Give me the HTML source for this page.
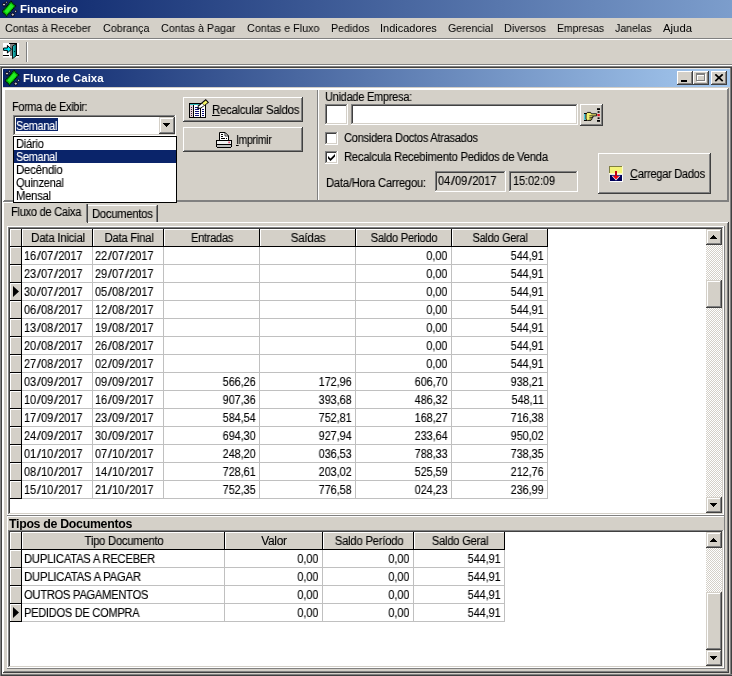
<!DOCTYPE html>
<html><head><meta charset="utf-8"><title>Financeiro</title>
<style>
html,body{margin:0;padding:0}
body{width:732px;height:676px;overflow:hidden;background:#d4d0c8;position:relative;font-family:"Liberation Sans",sans-serif;font-size:11px}
div,svg{position:absolute;box-sizing:border-box}
.t{white-space:nowrap;font-family:"Liberation Sans",sans-serif;will-change:transform;-webkit-font-smoothing:antialiased}
.sl{display:inline-block;transform:scaleX(1.45);margin:0 1.2px}
.tb{background:linear-gradient(to right,#0a246a 0%,#a6caf0 100%)}
.trk{background-color:#eae8e4;background-image:linear-gradient(45deg,#fff 25%,transparent 25%,transparent 75%,#fff 75%),linear-gradient(45deg,#fff 25%,transparent 25%,transparent 75%,#fff 75%);background-size:2px 2px;background-position:0 0,1px 1px;background-color:#d4d0c8}
u{text-decoration:underline}
</style></head><body>
<div style="left:0px;top:0px;width:732px;height:18px;background:linear-gradient(to right,#0a246a 0px,#a6caf0 1000px);"></div>
<svg style="left:0px;top:0px" width="18" height="18" viewBox="0 0 18 18">
<polygon points="11,1.3 15.7,6 6.6,16.2 2.2,11.6" fill="#08c808" stroke="#001000" stroke-width="1.2" stroke-dasharray="1.3 0.5"/>
<polygon points="10.8,3.8 13.4,6.4 7,13.6 4.6,11.2" fill="#24ee24"/>
<path d="M10.3,3.4 L4.2,10.4" stroke="#005800" stroke-width="0.9" stroke-dasharray="1 0.7" fill="none"/>
<circle cx="4" cy="4.6" r="1.5" fill="#c8c8c8" stroke="#000010" stroke-width="1"/>
<circle cx="6.6" cy="2.2" r="1" fill="#d8d8d8" stroke="#000010" stroke-width="0.9"/>
<circle cx="15.6" cy="11.3" r="1.1" fill="#d8d8d8" stroke="#000010" stroke-width="0.9"/>
<circle cx="12.8" cy="14.6" r="1.6" fill="#c8c8c8" stroke="#000010" stroke-width="1"/>
</svg>
<div class="t" style="top:3px;font-size:11px;line-height:13px;color:#fff;font-weight:bold;left:20.37px;transform-origin:0 0;transform:scaleX(1.043);">Financeiro</div>
<div class="t" style="top:22px;font-size:11px;line-height:13px;color:#000;left:5.42px;transform-origin:0 0;transform:scaleX(0.970);">Contas à Receber</div>
<div class="t" style="top:22px;font-size:11px;line-height:13px;color:#000;left:102.92px;transform-origin:0 0;transform:scaleX(0.975);">Cobrança</div>
<div class="t" style="top:22px;font-size:11px;line-height:13px;color:#000;left:160.92px;transform-origin:0 0;transform:scaleX(0.975);">Contas à Pagar</div>
<div class="t" style="top:22px;font-size:11px;line-height:13px;color:#000;left:246.91px;transform-origin:0 0;transform:scaleX(0.980);">Contas e Fluxo</div>
<div class="t" style="top:22px;font-size:11px;line-height:13px;color:#000;left:330.92px;transform-origin:0 0;transform:scaleX(0.969);">Pedidos</div>
<div class="t" style="top:22px;font-size:11px;line-height:13px;color:#000;left:379.9px;transform-origin:0 0;">Indicadores</div>
<div class="t" style="top:22px;font-size:11px;line-height:13px;color:#000;left:447.93px;transform-origin:0 0;transform:scaleX(0.956);">Gerencial</div>
<div class="t" style="top:22px;font-size:11px;line-height:13px;color:#000;left:503.91px;transform-origin:0 0;transform:scaleX(0.982);">Diversos</div>
<div class="t" style="top:22px;font-size:11px;line-height:13px;color:#000;left:556.93px;transform-origin:0 0;transform:scaleX(0.949);">Empresas</div>
<div class="t" style="top:22px;font-size:11px;line-height:13px;color:#000;left:615.42px;transform-origin:0 0;transform:scaleX(0.963);">Janelas</div>
<div class="t" style="top:22px;font-size:11px;line-height:13px;color:#000;left:662.88px;transform-origin:0 0;transform:scaleX(1.031);">Ajuda</div>
<div style="left:0px;top:38px;width:732px;height:1px;background:#808080;"></div>
<div style="left:0px;top:39px;width:732px;height:1px;background:#ffffff;"></div>
<svg style="left:3px;top:43px" width="17" height="17" viewBox="0 0 17 17" shape-rendering="crispEdges">
<rect x="0" y="0" width="16" height="14" fill="#fff"/>
<rect x="0" y="14" width="16" height="1" fill="#ebe9e5"/>
<rect x="6.5" y="1" width="6" height="11.5" fill="#808080"/>
<rect x="6" y="0" width="8" height="1" fill="#000"/>
<rect x="13" y="0" width="1" height="13" fill="#000"/>
<rect x="0" y="12" width="6" height="1" fill="#000"/>
<rect x="13" y="12" width="3" height="1" fill="#000"/>
<polygon points="9.5,3.2 13,1 13,13 9.5,15.6" fill="#20b4b4" stroke="#000" stroke-width="0.9" shape-rendering="auto"/>
<polygon points="11.4,2.6 12.6,1.8 12.6,12.6 11.4,13.6" fill="#008888" shape-rendering="auto"/>
<rect x="10.5" y="8" width="1" height="1" fill="#003030"/>
<polygon points="0.6,5 4.4,5 4.4,2.4 8.4,6.2 4.4,10 4.4,7.4 0.6,7.4" fill="#00e8f8" stroke="#000" stroke-width="1" shape-rendering="auto"/>
</svg>
<div style="left:26px;top:42px;width:1px;height:20px;background:#808080;"></div>
<div style="left:27px;top:42px;width:1px;height:20px;background:#ffffff;"></div>
<div style="left:0px;top:64px;width:732px;height:1px;background:#808080;"></div>
<div style="left:0px;top:65px;width:732px;height:1px;background:#ffffff;"></div>
<div style="left:0px;top:66px;width:732px;height:1px;background:#808080;"></div>
<div style="left:1px;top:67px;width:731px;height:1px;background:#404040;"></div>
<div style="left:0px;top:66px;width:1px;height:610px;background:#808080;"></div>
<div style="left:1px;top:67px;width:1px;height:609px;background:#404040;"></div>
<div style="left:2px;top:68px;width:1px;height:608px;background:#ffffff;"></div>
<div style="left:2px;top:68px;width:728px;height:1px;background:#e8e6e2;"></div>
<div style="left:730px;top:68px;width:1px;height:608px;background:#808080;"></div>
<div style="left:731px;top:68px;width:1px;height:608px;background:#404040;"></div>
<div style="left:2px;top:674px;width:730px;height:1px;background:#808080;"></div>
<div style="left:2px;top:675px;width:730px;height:1px;background:#404040;"></div>
<div class="tb" style="left:3px;top:69px;width:727px;height:18px;"></div>
<svg style="left:3px;top:69px" width="18" height="18" viewBox="0 0 18 18">
<polygon points="11,1.3 15.7,6 6.6,16.2 2.2,11.6" fill="#08c808" stroke="#001000" stroke-width="1.2" stroke-dasharray="1.3 0.5"/>
<polygon points="10.8,3.8 13.4,6.4 7,13.6 4.6,11.2" fill="#24ee24"/>
<path d="M10.3,3.4 L4.2,10.4" stroke="#005800" stroke-width="0.9" stroke-dasharray="1 0.7" fill="none"/>
<circle cx="4" cy="4.6" r="1.5" fill="#c8c8c8" stroke="#000010" stroke-width="1"/>
<circle cx="6.6" cy="2.2" r="1" fill="#d8d8d8" stroke="#000010" stroke-width="0.9"/>
<circle cx="15.6" cy="11.3" r="1.1" fill="#d8d8d8" stroke="#000010" stroke-width="0.9"/>
<circle cx="12.8" cy="14.6" r="1.6" fill="#c8c8c8" stroke="#000010" stroke-width="1"/>
</svg>
<div class="t" style="top:72px;font-size:11px;line-height:13px;color:#fff;font-weight:bold;left:23.38px;transform-origin:0 0;transform:scaleX(1.037);">Fluxo de Caixa</div>
<div style="left:677px;top:71px;width:16px;height:14px;background:#d4d0c8;"></div>
<div style="left:677px;top:71px;width:15px;height:1px;background:#ffffff;"></div>
<div style="left:677px;top:71px;width:1px;height:13px;background:#ffffff;"></div>
<div style="left:677px;top:84px;width:16px;height:1px;background:#404040;"></div>
<div style="left:692px;top:71px;width:1px;height:14px;background:#404040;"></div>
<div style="left:678px;top:83px;width:14px;height:1px;background:#808080;"></div>
<div style="left:691px;top:72px;width:1px;height:12px;background:#808080;"></div>
<div style="left:693px;top:71px;width:16px;height:14px;background:#d4d0c8;"></div>
<div style="left:693px;top:71px;width:15px;height:1px;background:#ffffff;"></div>
<div style="left:693px;top:71px;width:1px;height:13px;background:#ffffff;"></div>
<div style="left:693px;top:84px;width:16px;height:1px;background:#404040;"></div>
<div style="left:708px;top:71px;width:1px;height:14px;background:#404040;"></div>
<div style="left:694px;top:83px;width:14px;height:1px;background:#808080;"></div>
<div style="left:707px;top:72px;width:1px;height:12px;background:#808080;"></div>
<div style="left:711px;top:71px;width:16px;height:14px;background:#d4d0c8;"></div>
<div style="left:711px;top:71px;width:15px;height:1px;background:#ffffff;"></div>
<div style="left:711px;top:71px;width:1px;height:13px;background:#ffffff;"></div>
<div style="left:711px;top:84px;width:16px;height:1px;background:#404040;"></div>
<div style="left:726px;top:71px;width:1px;height:14px;background:#404040;"></div>
<div style="left:712px;top:83px;width:14px;height:1px;background:#808080;"></div>
<div style="left:725px;top:72px;width:1px;height:12px;background:#808080;"></div>
<div style="left:681px;top:80px;width:6px;height:2px;background:#000;"></div>
<div style="left:697px;top:74px;width:9px;height:8px;border:1px solid #fff;border-top-width:2px;"></div>
<div style="left:696px;top:73px;width:9px;height:8px;border:1px solid #808080;border-top-width:2px;"></div>
<svg style="left:714px;top:74px" width="10" height="8" viewBox="0 0 10 8"><path d="M1.3,0.3 L8.7,7.2 M8.7,0.3 L1.3,7.2" stroke="#000" stroke-width="1.7" fill="none"/></svg>
<div style="left:3px;top:88px;width:726px;height:1px;background:#ffffff;"></div>
<div style="left:3px;top:89px;width:725px;height:1px;background:#ffffff;"></div>
<div style="left:3px;top:88px;width:1px;height:114px;background:#ffffff;"></div>
<div style="left:4px;top:88px;width:1px;height:113px;background:#ffffff;"></div>
<div style="left:727px;top:89px;width:1px;height:113px;background:#808080;"></div>
<div style="left:728px;top:88px;width:1px;height:114px;background:#808080;"></div>
<div style="left:3px;top:201px;width:726px;height:1px;background:#808080;"></div>
<div style="left:3px;top:202px;width:1px;height:470px;background:#ffffff;"></div>
<div style="left:727px;top:223px;width:1px;height:449px;background:#808080;"></div>
<div style="left:728px;top:222px;width:1px;height:451px;background:#404040;"></div>
<div style="left:4px;top:671px;width:724px;height:1px;background:#808080;"></div>
<div style="left:3px;top:672px;width:726px;height:1px;background:#404040;"></div>
<div style="left:317px;top:90px;width:1px;height:110px;background:#808080;"></div>
<div style="left:318px;top:90px;width:1px;height:110px;background:#ffffff;"></div>
<div style="left:4px;top:200px;width:724px;height:1px;background:#808080;"></div>
<div style="left:87px;top:222px;width:641px;height:1px;background:#ffffff;"></div>
<div style="left:4px;top:202px;width:82px;height:1px;background:#ffffff;"></div>
<div style="left:3px;top:203px;width:1px;height:20px;background:#ffffff;"></div>
<div style="left:86px;top:204px;width:1px;height:18px;background:#808080;"></div>
<div style="left:87px;top:204px;width:1px;height:19px;background:#404040;"></div>
<div class="t" style="top:206px;font-size:12px;line-height:13px;color:#000;-webkit-text-stroke:0.12px;letter-spacing:-0.3px;left:10.75px;transform-origin:0 0;transform:scaleX(0.924);">Fluxo de Caixa</div>
<div style="left:88px;top:205px;width:68px;height:1px;background:#ffffff;"></div>
<div style="left:156px;top:206px;width:1px;height:16px;background:#808080;"></div>
<div style="left:157px;top:205px;width:1px;height:17px;background:#404040;"></div>
<div class="t" style="top:208px;font-size:12px;line-height:13px;color:#000;-webkit-text-stroke:0.12px;letter-spacing:-0.3px;left:91.94px;transform-origin:0 0;transform:scaleX(0.940);">Documentos</div>
<div class="t" style="top:101px;font-size:12px;line-height:13px;color:#000;-webkit-text-stroke:0.12px;letter-spacing:-0.3px;left:11.86px;transform-origin:0 0;transform:scaleX(0.904);">Forma de Exibir:</div>
<div style="left:13px;top:115px;width:163px;height:21px;background:#fff;"></div>
<div style="left:13px;top:115px;width:162px;height:1px;background:#808080;"></div>
<div style="left:13px;top:115px;width:1px;height:20px;background:#808080;"></div>
<div style="left:14px;top:116px;width:160px;height:1px;background:#404040;"></div>
<div style="left:14px;top:116px;width:1px;height:18px;background:#404040;"></div>
<div style="left:13px;top:135px;width:163px;height:1px;background:#ffffff;"></div>
<div style="left:175px;top:115px;width:1px;height:21px;background:#ffffff;"></div>
<div style="left:14px;top:134px;width:161px;height:1px;background:#d4d0c8;"></div>
<div style="left:174px;top:116px;width:1px;height:19px;background:#d4d0c8;"></div>
<div style="left:16px;top:118px;width:42px;height:13px;background:#0a246a;"></div>
<div class="t" style="top:120px;font-size:12px;line-height:13px;color:#fff;-webkit-text-stroke:0.12px;letter-spacing:-0.3px;left:16.06px;transform-origin:0 0;transform:scaleX(0.906);">Semanal</div>
<div style="left:159px;top:117px;width:16px;height:17px;background:#d4d0c8;"></div>
<div style="left:160px;top:118px;width:13px;height:1px;background:#ffffff;"></div>
<div style="left:160px;top:118px;width:1px;height:14px;background:#ffffff;"></div>
<div style="left:159px;top:133px;width:16px;height:1px;background:#404040;"></div>
<div style="left:174px;top:117px;width:1px;height:17px;background:#404040;"></div>
<div style="left:160px;top:132px;width:14px;height:1px;background:#808080;"></div>
<div style="left:173px;top:118px;width:1px;height:15px;background:#808080;"></div>
<div style="left:163px;top:123px;width:7px;height:1px;background:#000;"></div>
<div style="left:164px;top:124px;width:5px;height:1px;background:#000;"></div>
<div style="left:165px;top:125px;width:3px;height:1px;background:#000;"></div>
<div style="left:166px;top:126px;width:1px;height:1px;background:#000;"></div>
<div style="left:13px;top:136px;width:164px;height:67px;background:#fff;border:1px solid #000;"></div>
<div class="t" style="top:138px;font-size:12px;line-height:13px;color:#000;-webkit-text-stroke:0.12px;letter-spacing:-0.3px;left:16.04px;transform-origin:0 0;transform:scaleX(0.934);">Diário</div>
<div style="left:14px;top:150px;width:162px;height:13px;background:#0a246a;"></div>
<div class="t" style="top:151px;font-size:12px;line-height:13px;color:#fff;-webkit-text-stroke:0.12px;letter-spacing:-0.3px;left:16.06px;transform-origin:0 0;transform:scaleX(0.906);">Semanal</div>
<div class="t" style="top:164px;font-size:12px;line-height:13px;color:#000;-webkit-text-stroke:0.12px;letter-spacing:-0.3px;left:16.02px;transform-origin:0 0;transform:scaleX(0.961);">Decêndio</div>
<div class="t" style="top:177px;font-size:12px;line-height:13px;color:#000;-webkit-text-stroke:0.12px;letter-spacing:-0.3px;left:16.04px;transform-origin:0 0;transform:scaleX(0.929);">Quinzenal</div>
<div class="t" style="top:190px;font-size:12px;line-height:13px;color:#000;-webkit-text-stroke:0.12px;letter-spacing:-0.3px;left:16.04px;transform-origin:0 0;transform:scaleX(0.941);">Mensal</div>
<div style="left:183px;top:97px;width:120px;height:25px;background:#d4d0c8;"></div>
<div style="left:183px;top:97px;width:119px;height:1px;background:#ffffff;"></div>
<div style="left:183px;top:97px;width:1px;height:24px;background:#ffffff;"></div>
<div style="left:183px;top:121px;width:120px;height:1px;background:#404040;"></div>
<div style="left:302px;top:97px;width:1px;height:25px;background:#404040;"></div>
<div style="left:184px;top:120px;width:118px;height:1px;background:#808080;"></div>
<div style="left:301px;top:98px;width:1px;height:23px;background:#808080;"></div>
<svg style="left:188px;top:98px" width="22" height="22" viewBox="0 0 22 22" shape-rendering="crispEdges"><rect x="1" y="5" width="17" height="15" fill="#000"/><rect x="2" y="6" width="15" height="13" fill="#fff"/><rect x="2" y="6" width="9" height="1" fill="#30b8b8"/><rect x="2" y="7" width="3" height="12" fill="#e4d0d8"/><rect x="5" y="7" width="1" height="12" fill="#000"/><rect x="12" y="9" width="1" height="10" fill="#000"/><rect x="3" y="9" width="1" height="1" fill="#302030"/><rect x="7" y="9" width="4" height="1" fill="#101078"/><rect x="3" y="11" width="1" height="1" fill="#302030"/><rect x="7" y="11" width="4" height="1" fill="#101078"/><rect x="14" y="11" width="2" height="1" fill="#101078"/><rect x="3" y="13" width="1" height="1" fill="#302030"/><rect x="7" y="13" width="4" height="1" fill="#101078"/><rect x="14" y="13" width="2" height="1" fill="#101078"/><rect x="3" y="15" width="1" height="1" fill="#302030"/><rect x="7" y="15" width="4" height="1" fill="#101078"/><rect x="14" y="15" width="2" height="1" fill="#101078"/><rect x="3" y="17" width="1" height="1" fill="#302030"/><rect x="7" y="17" width="4" height="1" fill="#101078"/><rect x="14" y="17" width="2" height="1" fill="#101078"/><g shape-rendering="auto"><polygon points="9.2,11.2 10,7.6 17.8,1 21,4.6 12.8,10.6" fill="#000"/><polygon points="10.6,9.8 11,8.2 14.2,5.6 16,7.6 12.4,9.8" fill="#fff"/><polygon points="14.4,5.2 17.8,2.4 19.6,4.6 16.2,7.2" fill="#f4f468"/></g></svg>
<div class="t" style="top:104px;font-size:12px;line-height:13px;color:#000;-webkit-text-stroke:0.12px;letter-spacing:-0.3px;left:211.83px;transform-origin:0 0;transform:scaleX(0.950);"><u>R</u>ecalcular Saldos</div>
<div style="left:183px;top:127px;width:120px;height:25px;background:#d4d0c8;"></div>
<div style="left:183px;top:127px;width:119px;height:1px;background:#ffffff;"></div>
<div style="left:183px;top:127px;width:1px;height:24px;background:#ffffff;"></div>
<div style="left:183px;top:151px;width:120px;height:1px;background:#404040;"></div>
<div style="left:302px;top:127px;width:1px;height:25px;background:#404040;"></div>
<div style="left:184px;top:150px;width:118px;height:1px;background:#808080;"></div>
<div style="left:301px;top:128px;width:1px;height:23px;background:#808080;"></div>
<svg style="left:215px;top:131px" width="18" height="18" viewBox="0 0 18 18">
<polygon points="4.5,1.5 10,1.5 13.5,5 13.5,9.5 4.5,9.5" fill="#fff" stroke="#000" stroke-width="1"/>
<polygon points="10,1.5 10,5 13.5,5" fill="#fff" stroke="#000" stroke-width="0.8"/>
<g fill="#000"><rect x="6" y="3" width="2" height="1"/><rect x="6" y="5" width="2" height="1"/><rect x="6" y="7" width="4" height="1"/><rect x="11" y="7" width="1" height="1"/></g>
<rect x="1.5" y="9.5" width="15" height="4" fill="#f0f0f0" stroke="#000" stroke-width="1"/>
<rect x="13.4" y="10.6" width="1.4" height="1.6" fill="#e02050"/>
<rect x="2" y="14" width="14" height="2" fill="#c0c0c0"/>
<rect x="1" y="13" width="1" height="3" fill="#000"/><rect x="16" y="13" width="1" height="3" fill="#000"/>
<rect x="2" y="16" width="14" height="1" fill="#000"/>
</svg>
<div class="t" style="top:134px;font-size:12px;line-height:13px;color:#000;-webkit-text-stroke:0.12px;letter-spacing:-0.3px;left:236.08px;transform-origin:0 0;transform:scaleX(0.865);"><u>I</u>mprimir</div>
<div class="t" style="top:91px;font-size:12px;line-height:13px;color:#000;-webkit-text-stroke:0.12px;letter-spacing:-0.3px;left:325.15px;transform-origin:0 0;transform:scaleX(0.919);">Unidade Empresa:</div>
<div style="left:325px;top:104px;width:23px;height:21px;background:#fff;"></div>
<div style="left:325px;top:104px;width:22px;height:1px;background:#808080;"></div>
<div style="left:325px;top:104px;width:1px;height:20px;background:#808080;"></div>
<div style="left:326px;top:105px;width:20px;height:1px;background:#404040;"></div>
<div style="left:326px;top:105px;width:1px;height:18px;background:#404040;"></div>
<div style="left:325px;top:124px;width:23px;height:1px;background:#ffffff;"></div>
<div style="left:347px;top:104px;width:1px;height:21px;background:#ffffff;"></div>
<div style="left:326px;top:123px;width:21px;height:1px;background:#d4d0c8;"></div>
<div style="left:346px;top:105px;width:1px;height:19px;background:#d4d0c8;"></div>
<div style="left:351px;top:104px;width:227px;height:21px;background:#fff;"></div>
<div style="left:351px;top:104px;width:226px;height:1px;background:#808080;"></div>
<div style="left:351px;top:104px;width:1px;height:20px;background:#808080;"></div>
<div style="left:352px;top:105px;width:224px;height:1px;background:#404040;"></div>
<div style="left:352px;top:105px;width:1px;height:18px;background:#404040;"></div>
<div style="left:351px;top:124px;width:227px;height:1px;background:#ffffff;"></div>
<div style="left:577px;top:104px;width:1px;height:21px;background:#ffffff;"></div>
<div style="left:352px;top:123px;width:225px;height:1px;background:#d4d0c8;"></div>
<div style="left:576px;top:105px;width:1px;height:19px;background:#d4d0c8;"></div>
<div style="left:580px;top:104px;width:23px;height:22px;background:#d4d0c8;"></div>
<div style="left:580px;top:104px;width:22px;height:1px;background:#ffffff;"></div>
<div style="left:580px;top:104px;width:1px;height:21px;background:#ffffff;"></div>
<div style="left:580px;top:125px;width:23px;height:1px;background:#404040;"></div>
<div style="left:602px;top:104px;width:1px;height:22px;background:#404040;"></div>
<div style="left:581px;top:124px;width:21px;height:1px;background:#808080;"></div>
<div style="left:601px;top:105px;width:1px;height:20px;background:#808080;"></div>
<svg style="left:583px;top:107px" width="19" height="17" viewBox="0 0 19 17">
<rect x="1" y="6.6" width="1.6" height="6.4" fill="#48d0e0"/>
<rect x="1" y="6" width="3" height="1" fill="#000"/><rect x="1" y="13" width="3" height="1" fill="#000"/>
<path d="M3,7 L4.4,5.4 L7.6,5.4 L8.4,6.8 L13.6,6.8 L13.6,8.8 L10,9 L10,10.4 L9,10.4 L9,12 L8,13.4 L4.4,13.4 L3,12.4 Z" fill="#f4f070" stroke="#000" stroke-width="0.9"/>
<path d="M6.4,8.8 L10,8.8 M6.4,10.6 L9,10.6 M6.4,12 L8.4,12" stroke="#000" stroke-width="0.7" fill="none"/>
<g fill="#000"><rect x="14" y="1.2" width="3" height="1.8"/><rect x="14.6" y="4.2" width="2" height="1.6"/><rect x="14.6" y="10.4" width="2" height="1.6"/><rect x="14" y="13" width="3" height="1.8"/></g>
<rect x="14.4" y="7" width="2.4" height="2.2" fill="#e01020"/>
</svg>
<div style="left:325px;top:132px;width:13px;height:13px;background:#fff;"></div>
<div style="left:325px;top:132px;width:12px;height:1px;background:#808080;"></div>
<div style="left:325px;top:132px;width:1px;height:12px;background:#808080;"></div>
<div style="left:326px;top:133px;width:10px;height:1px;background:#404040;"></div>
<div style="left:326px;top:133px;width:1px;height:10px;background:#404040;"></div>
<div style="left:325px;top:144px;width:13px;height:1px;background:#ffffff;"></div>
<div style="left:337px;top:132px;width:1px;height:13px;background:#ffffff;"></div>
<div style="left:326px;top:143px;width:11px;height:1px;background:#d4d0c8;"></div>
<div style="left:336px;top:133px;width:1px;height:11px;background:#d4d0c8;"></div>
<div style="left:325px;top:151px;width:13px;height:13px;background:#fff;"></div>
<div style="left:325px;top:151px;width:12px;height:1px;background:#808080;"></div>
<div style="left:325px;top:151px;width:1px;height:12px;background:#808080;"></div>
<div style="left:326px;top:152px;width:10px;height:1px;background:#404040;"></div>
<div style="left:326px;top:152px;width:1px;height:10px;background:#404040;"></div>
<div style="left:325px;top:163px;width:13px;height:1px;background:#ffffff;"></div>
<div style="left:337px;top:151px;width:1px;height:13px;background:#ffffff;"></div>
<div style="left:326px;top:162px;width:11px;height:1px;background:#d4d0c8;"></div>
<div style="left:336px;top:152px;width:1px;height:11px;background:#d4d0c8;"></div>
<svg style="left:328px;top:154px" width="7" height="7" viewBox="0 0 7 7"><path d="M0,2 L2.5,4.5 L7,0 L7,2.6 L2.5,7 L0,4.6 Z" fill="#000"/></svg>
<div class="t" style="top:132px;font-size:12px;line-height:13px;color:#000;-webkit-text-stroke:0.12px;letter-spacing:-0.3px;left:343.74px;transform-origin:0 0;transform:scaleX(0.927);">Considera Doctos Atrasados</div>
<div class="t" style="top:151px;font-size:12px;line-height:13px;color:#000;-webkit-text-stroke:0.12px;letter-spacing:-0.3px;left:343.73px;transform-origin:0 0;transform:scaleX(0.943);">Recalcula Recebimento Pedidos de Venda</div>
<div class="t" style="top:177px;font-size:12px;line-height:13px;color:#000;-webkit-text-stroke:0.12px;letter-spacing:-0.3px;left:326.13px;transform-origin:0 0;transform:scaleX(0.944);">Data/Hora Carregou:</div>
<div style="left:435px;top:171px;width:71px;height:21px;background:#d4d0c8;"></div>
<div style="left:435px;top:171px;width:70px;height:1px;background:#808080;"></div>
<div style="left:435px;top:171px;width:1px;height:20px;background:#808080;"></div>
<div style="left:436px;top:172px;width:68px;height:1px;background:#404040;"></div>
<div style="left:436px;top:172px;width:1px;height:18px;background:#404040;"></div>
<div style="left:435px;top:191px;width:71px;height:1px;background:#ffffff;"></div>
<div style="left:505px;top:171px;width:1px;height:21px;background:#ffffff;"></div>
<div style="left:436px;top:190px;width:69px;height:1px;background:#d4d0c8;"></div>
<div style="left:504px;top:172px;width:1px;height:19px;background:#d4d0c8;"></div>
<div class="t" style="top:175px;font-size:12px;line-height:13px;color:#000;-webkit-text-stroke:0.12px;left:438.26px;transform-origin:0 0;transform:scaleX(0.900);">04<span class="sl">/</span>09<span class="sl">/</span>2017</div>
<div style="left:509px;top:171px;width:69px;height:21px;background:#d4d0c8;"></div>
<div style="left:509px;top:171px;width:68px;height:1px;background:#808080;"></div>
<div style="left:509px;top:171px;width:1px;height:20px;background:#808080;"></div>
<div style="left:510px;top:172px;width:66px;height:1px;background:#404040;"></div>
<div style="left:510px;top:172px;width:1px;height:18px;background:#404040;"></div>
<div style="left:509px;top:191px;width:69px;height:1px;background:#ffffff;"></div>
<div style="left:577px;top:171px;width:1px;height:21px;background:#ffffff;"></div>
<div style="left:510px;top:190px;width:67px;height:1px;background:#d4d0c8;"></div>
<div style="left:576px;top:172px;width:1px;height:19px;background:#d4d0c8;"></div>
<div class="t" style="top:175px;font-size:12px;line-height:13px;color:#000;-webkit-text-stroke:0.12px;left:512.76px;transform-origin:0 0;transform:scaleX(0.900);">15:02:09</div>
<div style="left:598px;top:153px;width:113px;height:41px;background:#d4d0c8;"></div>
<div style="left:598px;top:153px;width:112px;height:1px;background:#ffffff;"></div>
<div style="left:598px;top:153px;width:1px;height:40px;background:#ffffff;"></div>
<div style="left:598px;top:193px;width:113px;height:1px;background:#404040;"></div>
<div style="left:710px;top:153px;width:1px;height:41px;background:#404040;"></div>
<div style="left:599px;top:192px;width:111px;height:1px;background:#808080;"></div>
<div style="left:709px;top:154px;width:1px;height:39px;background:#808080;"></div>
<svg style="left:609px;top:166px" width="15" height="17" viewBox="0 0 15 17">
<rect x="0" y="0" width="14" height="8" fill="#fbfbc8"/>
<rect x="1" y="1" width="12" height="6" fill="#f4f478"/>
<rect x="0" y="0" width="13" height="1" fill="#808040"/><rect x="0" y="0" width="1" height="7" fill="#808040"/>
<rect x="0" y="8" width="14" height="1" fill="#ecebe6"/>
<rect x="0.6" y="9" width="13.4" height="7" fill="#fff"/>
<rect x="1" y="9" width="12" height="6" fill="#000058"/>
<polygon points="2.6,9.8 11.4,9.8 7,14.6" fill="#fff"/>
<rect x="6" y="5" width="2" height="5.4" fill="#c00010"/>
<polygon points="3.8,10 10.2,10 7,13.4" fill="#f00010"/>
</svg>
<div class="t" style="top:168px;font-size:12px;line-height:13px;color:#000;-webkit-text-stroke:0.12px;letter-spacing:-0.3px;left:630.45px;transform-origin:0 0;transform:scaleX(0.922);"><u>C</u>arregar Dados</div>
<div style="left:7px;top:226px;width:718px;height:1px;background:#ffffff;"></div>
<div style="left:7px;top:226px;width:1px;height:443px;background:#ffffff;"></div>
<div style="left:724px;top:226px;width:1px;height:443px;background:#808080;"></div>
<div style="left:7px;top:668px;width:718px;height:1px;background:#808080;"></div>
<div style="left:8px;top:227px;width:716px;height:288px;background:#fff;"></div>
<div style="left:8px;top:227px;width:715px;height:1px;background:#808080;"></div>
<div style="left:8px;top:227px;width:1px;height:287px;background:#808080;"></div>
<div style="left:9px;top:228px;width:713px;height:1px;background:#404040;"></div>
<div style="left:9px;top:228px;width:1px;height:285px;background:#404040;"></div>
<div style="left:8px;top:514px;width:716px;height:1px;background:#ffffff;"></div>
<div style="left:723px;top:227px;width:1px;height:288px;background:#ffffff;"></div>
<div style="left:9px;top:513px;width:714px;height:1px;background:#d4d0c8;"></div>
<div style="left:722px;top:228px;width:1px;height:286px;background:#d4d0c8;"></div>
<div style="left:10px;top:229px;width:11px;height:17px;background:#d4d0c8;"></div>
<div style="left:10px;top:229px;width:11px;height:1px;background:#ffffff;"></div>
<div style="left:10px;top:229px;width:1px;height:17px;background:#ffffff;"></div>
<div style="left:21px;top:229px;width:1px;height:18px;background:#000;"></div>
<div style="left:22px;top:229px;width:70px;height:17px;background:#d4d0c8;"></div>
<div style="left:22px;top:229px;width:70px;height:1px;background:#ffffff;"></div>
<div style="left:22px;top:229px;width:1px;height:17px;background:#ffffff;"></div>
<div style="left:92px;top:229px;width:1px;height:18px;background:#000;"></div>
<div class="t" style="top:232px;font-size:12px;line-height:13px;color:#000;-webkit-text-stroke:0.12px;letter-spacing:-0.3px;left:-92.3px;width:300px;text-align:center;transform-origin:50% 0;transform:scaleX(0.961);">Data Inicial</div>
<div style="left:93px;top:229px;width:70px;height:17px;background:#d4d0c8;"></div>
<div style="left:93px;top:229px;width:70px;height:1px;background:#ffffff;"></div>
<div style="left:93px;top:229px;width:1px;height:17px;background:#ffffff;"></div>
<div style="left:163px;top:229px;width:1px;height:18px;background:#000;"></div>
<div class="t" style="top:232px;font-size:12px;line-height:13px;color:#000;-webkit-text-stroke:0.12px;letter-spacing:-0.3px;left:-21.3px;width:300px;text-align:center;transform-origin:50% 0;transform:scaleX(0.950);">Data Final</div>
<div style="left:164px;top:229px;width:95px;height:17px;background:#d4d0c8;"></div>
<div style="left:164px;top:229px;width:95px;height:1px;background:#ffffff;"></div>
<div style="left:164px;top:229px;width:1px;height:17px;background:#ffffff;"></div>
<div style="left:259px;top:229px;width:1px;height:18px;background:#000;"></div>
<div class="t" style="top:232px;font-size:12px;line-height:13px;color:#000;-webkit-text-stroke:0.12px;letter-spacing:-0.3px;left:62.2px;width:300px;text-align:center;transform-origin:50% 0;transform:scaleX(0.925);">Entradas</div>
<div style="left:260px;top:229px;width:95px;height:17px;background:#d4d0c8;"></div>
<div style="left:260px;top:229px;width:95px;height:1px;background:#ffffff;"></div>
<div style="left:260px;top:229px;width:1px;height:17px;background:#ffffff;"></div>
<div style="left:355px;top:229px;width:1px;height:18px;background:#000;"></div>
<div class="t" style="top:232px;font-size:12px;line-height:13px;color:#000;-webkit-text-stroke:0.12px;letter-spacing:-0.3px;left:158.2px;width:300px;text-align:center;transform-origin:50% 0;transform:scaleX(0.973);">Saídas</div>
<div style="left:356px;top:229px;width:95px;height:17px;background:#d4d0c8;"></div>
<div style="left:356px;top:229px;width:95px;height:1px;background:#ffffff;"></div>
<div style="left:356px;top:229px;width:1px;height:17px;background:#ffffff;"></div>
<div style="left:451px;top:229px;width:1px;height:18px;background:#000;"></div>
<div class="t" style="top:232px;font-size:12px;line-height:13px;color:#000;-webkit-text-stroke:0.12px;letter-spacing:-0.3px;left:254.2px;width:300px;text-align:center;transform-origin:50% 0;transform:scaleX(0.932);">Saldo Periodo</div>
<div style="left:452px;top:229px;width:95px;height:17px;background:#d4d0c8;"></div>
<div style="left:452px;top:229px;width:95px;height:1px;background:#ffffff;"></div>
<div style="left:452px;top:229px;width:1px;height:17px;background:#ffffff;"></div>
<div style="left:547px;top:229px;width:1px;height:18px;background:#000;"></div>
<div class="t" style="top:232px;font-size:12px;line-height:13px;color:#000;-webkit-text-stroke:0.12px;letter-spacing:-0.3px;left:350.2px;width:300px;text-align:center;transform-origin:50% 0;transform:scaleX(0.916);">Saldo Geral</div>
<div style="left:10px;top:246px;width:538px;height:1px;background:#000;"></div>
<div style="left:10px;top:247px;width:11px;height:17px;background:#d4d0c8;"></div>
<div style="left:10px;top:247px;width:11px;height:1px;background:#ffffff;"></div>
<div style="left:10px;top:247px;width:1px;height:17px;background:#ffffff;"></div>
<div style="left:21px;top:247px;width:1px;height:18px;background:#000;"></div>
<div style="left:10px;top:264px;width:12px;height:1px;background:#000;"></div>
<div style="left:22px;top:264px;width:526px;height:1px;background:#c0c0c0;"></div>
<div style="left:92px;top:247px;width:1px;height:18px;background:#c0c0c0;"></div>
<div class="t" style="top:250px;font-size:12px;line-height:13px;color:#000;-webkit-text-stroke:0.12px;left:23.96px;transform-origin:0 0;transform:scaleX(0.900);">16<span class="sl">/</span>07<span class="sl">/</span>2017</div>
<div style="left:163px;top:247px;width:1px;height:18px;background:#c0c0c0;"></div>
<div class="t" style="top:250px;font-size:12px;line-height:13px;color:#000;-webkit-text-stroke:0.12px;left:94.96px;transform-origin:0 0;transform:scaleX(0.900);">22<span class="sl">/</span>07<span class="sl">/</span>2017</div>
<div style="left:259px;top:247px;width:1px;height:18px;background:#c0c0c0;"></div>
<div style="left:355px;top:247px;width:1px;height:18px;background:#c0c0c0;"></div>
<div style="left:451px;top:247px;width:1px;height:18px;background:#c0c0c0;"></div>
<div class="t" style="top:250px;font-size:12px;line-height:13px;color:#000;-webkit-text-stroke:0.12px;right:284.16px;transform-origin:100% 0;transform:scaleX(0.900);">0,00</div>
<div style="left:547px;top:247px;width:1px;height:18px;background:#c0c0c0;"></div>
<div class="t" style="top:250px;font-size:12px;line-height:13px;color:#000;-webkit-text-stroke:0.12px;right:188.16px;transform-origin:100% 0;transform:scaleX(0.900);">544,91</div>
<div style="left:10px;top:265px;width:11px;height:17px;background:#d4d0c8;"></div>
<div style="left:10px;top:265px;width:11px;height:1px;background:#ffffff;"></div>
<div style="left:10px;top:265px;width:1px;height:17px;background:#ffffff;"></div>
<div style="left:21px;top:265px;width:1px;height:18px;background:#000;"></div>
<div style="left:10px;top:282px;width:12px;height:1px;background:#000;"></div>
<div style="left:22px;top:282px;width:526px;height:1px;background:#c0c0c0;"></div>
<div style="left:92px;top:265px;width:1px;height:18px;background:#c0c0c0;"></div>
<div class="t" style="top:268px;font-size:12px;line-height:13px;color:#000;-webkit-text-stroke:0.12px;left:23.96px;transform-origin:0 0;transform:scaleX(0.900);">23<span class="sl">/</span>07<span class="sl">/</span>2017</div>
<div style="left:163px;top:265px;width:1px;height:18px;background:#c0c0c0;"></div>
<div class="t" style="top:268px;font-size:12px;line-height:13px;color:#000;-webkit-text-stroke:0.12px;left:94.96px;transform-origin:0 0;transform:scaleX(0.900);">29<span class="sl">/</span>07<span class="sl">/</span>2017</div>
<div style="left:259px;top:265px;width:1px;height:18px;background:#c0c0c0;"></div>
<div style="left:355px;top:265px;width:1px;height:18px;background:#c0c0c0;"></div>
<div style="left:451px;top:265px;width:1px;height:18px;background:#c0c0c0;"></div>
<div class="t" style="top:268px;font-size:12px;line-height:13px;color:#000;-webkit-text-stroke:0.12px;right:284.16px;transform-origin:100% 0;transform:scaleX(0.900);">0,00</div>
<div style="left:547px;top:265px;width:1px;height:18px;background:#c0c0c0;"></div>
<div class="t" style="top:268px;font-size:12px;line-height:13px;color:#000;-webkit-text-stroke:0.12px;right:188.16px;transform-origin:100% 0;transform:scaleX(0.900);">544,91</div>
<div style="left:10px;top:283px;width:11px;height:17px;background:#d4d0c8;"></div>
<div style="left:10px;top:283px;width:11px;height:1px;background:#ffffff;"></div>
<div style="left:10px;top:283px;width:1px;height:17px;background:#ffffff;"></div>
<div style="left:21px;top:283px;width:1px;height:18px;background:#000;"></div>
<div style="left:10px;top:300px;width:12px;height:1px;background:#000;"></div>
<svg style="left:13px;top:286px" width="6" height="11" viewBox="0 0 6 11"><polygon points="0,0 0,11 6,5.5" fill="#000"/></svg>
<div style="left:22px;top:300px;width:526px;height:1px;background:#c0c0c0;"></div>
<div style="left:92px;top:283px;width:1px;height:18px;background:#c0c0c0;"></div>
<div class="t" style="top:286px;font-size:12px;line-height:13px;color:#000;-webkit-text-stroke:0.12px;left:23.96px;transform-origin:0 0;transform:scaleX(0.900);">30<span class="sl">/</span>07<span class="sl">/</span>2017</div>
<div style="left:163px;top:283px;width:1px;height:18px;background:#c0c0c0;"></div>
<div class="t" style="top:286px;font-size:12px;line-height:13px;color:#000;-webkit-text-stroke:0.12px;left:94.96px;transform-origin:0 0;transform:scaleX(0.900);">05<span class="sl">/</span>08<span class="sl">/</span>2017</div>
<div style="left:259px;top:283px;width:1px;height:18px;background:#c0c0c0;"></div>
<div style="left:355px;top:283px;width:1px;height:18px;background:#c0c0c0;"></div>
<div style="left:451px;top:283px;width:1px;height:18px;background:#c0c0c0;"></div>
<div class="t" style="top:286px;font-size:12px;line-height:13px;color:#000;-webkit-text-stroke:0.12px;right:284.16px;transform-origin:100% 0;transform:scaleX(0.900);">0,00</div>
<div style="left:547px;top:283px;width:1px;height:18px;background:#c0c0c0;"></div>
<div class="t" style="top:286px;font-size:12px;line-height:13px;color:#000;-webkit-text-stroke:0.12px;right:188.16px;transform-origin:100% 0;transform:scaleX(0.900);">544,91</div>
<div style="left:10px;top:301px;width:11px;height:17px;background:#d4d0c8;"></div>
<div style="left:10px;top:301px;width:11px;height:1px;background:#ffffff;"></div>
<div style="left:10px;top:301px;width:1px;height:17px;background:#ffffff;"></div>
<div style="left:21px;top:301px;width:1px;height:18px;background:#000;"></div>
<div style="left:10px;top:318px;width:12px;height:1px;background:#000;"></div>
<div style="left:22px;top:318px;width:526px;height:1px;background:#c0c0c0;"></div>
<div style="left:92px;top:301px;width:1px;height:18px;background:#c0c0c0;"></div>
<div class="t" style="top:304px;font-size:12px;line-height:13px;color:#000;-webkit-text-stroke:0.12px;left:23.96px;transform-origin:0 0;transform:scaleX(0.900);">06<span class="sl">/</span>08<span class="sl">/</span>2017</div>
<div style="left:163px;top:301px;width:1px;height:18px;background:#c0c0c0;"></div>
<div class="t" style="top:304px;font-size:12px;line-height:13px;color:#000;-webkit-text-stroke:0.12px;left:94.96px;transform-origin:0 0;transform:scaleX(0.900);">12<span class="sl">/</span>08<span class="sl">/</span>2017</div>
<div style="left:259px;top:301px;width:1px;height:18px;background:#c0c0c0;"></div>
<div style="left:355px;top:301px;width:1px;height:18px;background:#c0c0c0;"></div>
<div style="left:451px;top:301px;width:1px;height:18px;background:#c0c0c0;"></div>
<div class="t" style="top:304px;font-size:12px;line-height:13px;color:#000;-webkit-text-stroke:0.12px;right:284.16px;transform-origin:100% 0;transform:scaleX(0.900);">0,00</div>
<div style="left:547px;top:301px;width:1px;height:18px;background:#c0c0c0;"></div>
<div class="t" style="top:304px;font-size:12px;line-height:13px;color:#000;-webkit-text-stroke:0.12px;right:188.16px;transform-origin:100% 0;transform:scaleX(0.900);">544,91</div>
<div style="left:10px;top:319px;width:11px;height:17px;background:#d4d0c8;"></div>
<div style="left:10px;top:319px;width:11px;height:1px;background:#ffffff;"></div>
<div style="left:10px;top:319px;width:1px;height:17px;background:#ffffff;"></div>
<div style="left:21px;top:319px;width:1px;height:18px;background:#000;"></div>
<div style="left:10px;top:336px;width:12px;height:1px;background:#000;"></div>
<div style="left:22px;top:336px;width:526px;height:1px;background:#c0c0c0;"></div>
<div style="left:92px;top:319px;width:1px;height:18px;background:#c0c0c0;"></div>
<div class="t" style="top:322px;font-size:12px;line-height:13px;color:#000;-webkit-text-stroke:0.12px;left:23.96px;transform-origin:0 0;transform:scaleX(0.900);">13<span class="sl">/</span>08<span class="sl">/</span>2017</div>
<div style="left:163px;top:319px;width:1px;height:18px;background:#c0c0c0;"></div>
<div class="t" style="top:322px;font-size:12px;line-height:13px;color:#000;-webkit-text-stroke:0.12px;left:94.96px;transform-origin:0 0;transform:scaleX(0.900);">19<span class="sl">/</span>08<span class="sl">/</span>2017</div>
<div style="left:259px;top:319px;width:1px;height:18px;background:#c0c0c0;"></div>
<div style="left:355px;top:319px;width:1px;height:18px;background:#c0c0c0;"></div>
<div style="left:451px;top:319px;width:1px;height:18px;background:#c0c0c0;"></div>
<div class="t" style="top:322px;font-size:12px;line-height:13px;color:#000;-webkit-text-stroke:0.12px;right:284.16px;transform-origin:100% 0;transform:scaleX(0.900);">0,00</div>
<div style="left:547px;top:319px;width:1px;height:18px;background:#c0c0c0;"></div>
<div class="t" style="top:322px;font-size:12px;line-height:13px;color:#000;-webkit-text-stroke:0.12px;right:188.16px;transform-origin:100% 0;transform:scaleX(0.900);">544,91</div>
<div style="left:10px;top:337px;width:11px;height:17px;background:#d4d0c8;"></div>
<div style="left:10px;top:337px;width:11px;height:1px;background:#ffffff;"></div>
<div style="left:10px;top:337px;width:1px;height:17px;background:#ffffff;"></div>
<div style="left:21px;top:337px;width:1px;height:18px;background:#000;"></div>
<div style="left:10px;top:354px;width:12px;height:1px;background:#000;"></div>
<div style="left:22px;top:354px;width:526px;height:1px;background:#c0c0c0;"></div>
<div style="left:92px;top:337px;width:1px;height:18px;background:#c0c0c0;"></div>
<div class="t" style="top:340px;font-size:12px;line-height:13px;color:#000;-webkit-text-stroke:0.12px;left:23.96px;transform-origin:0 0;transform:scaleX(0.900);">20<span class="sl">/</span>08<span class="sl">/</span>2017</div>
<div style="left:163px;top:337px;width:1px;height:18px;background:#c0c0c0;"></div>
<div class="t" style="top:340px;font-size:12px;line-height:13px;color:#000;-webkit-text-stroke:0.12px;left:94.96px;transform-origin:0 0;transform:scaleX(0.900);">26<span class="sl">/</span>08<span class="sl">/</span>2017</div>
<div style="left:259px;top:337px;width:1px;height:18px;background:#c0c0c0;"></div>
<div style="left:355px;top:337px;width:1px;height:18px;background:#c0c0c0;"></div>
<div style="left:451px;top:337px;width:1px;height:18px;background:#c0c0c0;"></div>
<div class="t" style="top:340px;font-size:12px;line-height:13px;color:#000;-webkit-text-stroke:0.12px;right:284.16px;transform-origin:100% 0;transform:scaleX(0.900);">0,00</div>
<div style="left:547px;top:337px;width:1px;height:18px;background:#c0c0c0;"></div>
<div class="t" style="top:340px;font-size:12px;line-height:13px;color:#000;-webkit-text-stroke:0.12px;right:188.16px;transform-origin:100% 0;transform:scaleX(0.900);">544,91</div>
<div style="left:10px;top:355px;width:11px;height:17px;background:#d4d0c8;"></div>
<div style="left:10px;top:355px;width:11px;height:1px;background:#ffffff;"></div>
<div style="left:10px;top:355px;width:1px;height:17px;background:#ffffff;"></div>
<div style="left:21px;top:355px;width:1px;height:18px;background:#000;"></div>
<div style="left:10px;top:372px;width:12px;height:1px;background:#000;"></div>
<div style="left:22px;top:372px;width:526px;height:1px;background:#c0c0c0;"></div>
<div style="left:92px;top:355px;width:1px;height:18px;background:#c0c0c0;"></div>
<div class="t" style="top:358px;font-size:12px;line-height:13px;color:#000;-webkit-text-stroke:0.12px;left:23.96px;transform-origin:0 0;transform:scaleX(0.900);">27<span class="sl">/</span>08<span class="sl">/</span>2017</div>
<div style="left:163px;top:355px;width:1px;height:18px;background:#c0c0c0;"></div>
<div class="t" style="top:358px;font-size:12px;line-height:13px;color:#000;-webkit-text-stroke:0.12px;left:94.96px;transform-origin:0 0;transform:scaleX(0.900);">02<span class="sl">/</span>09<span class="sl">/</span>2017</div>
<div style="left:259px;top:355px;width:1px;height:18px;background:#c0c0c0;"></div>
<div style="left:355px;top:355px;width:1px;height:18px;background:#c0c0c0;"></div>
<div style="left:451px;top:355px;width:1px;height:18px;background:#c0c0c0;"></div>
<div class="t" style="top:358px;font-size:12px;line-height:13px;color:#000;-webkit-text-stroke:0.12px;right:284.16px;transform-origin:100% 0;transform:scaleX(0.900);">0,00</div>
<div style="left:547px;top:355px;width:1px;height:18px;background:#c0c0c0;"></div>
<div class="t" style="top:358px;font-size:12px;line-height:13px;color:#000;-webkit-text-stroke:0.12px;right:188.16px;transform-origin:100% 0;transform:scaleX(0.900);">544,91</div>
<div style="left:10px;top:373px;width:11px;height:17px;background:#d4d0c8;"></div>
<div style="left:10px;top:373px;width:11px;height:1px;background:#ffffff;"></div>
<div style="left:10px;top:373px;width:1px;height:17px;background:#ffffff;"></div>
<div style="left:21px;top:373px;width:1px;height:18px;background:#000;"></div>
<div style="left:10px;top:390px;width:12px;height:1px;background:#000;"></div>
<div style="left:22px;top:390px;width:526px;height:1px;background:#c0c0c0;"></div>
<div style="left:92px;top:373px;width:1px;height:18px;background:#c0c0c0;"></div>
<div class="t" style="top:376px;font-size:12px;line-height:13px;color:#000;-webkit-text-stroke:0.12px;left:23.96px;transform-origin:0 0;transform:scaleX(0.900);">03<span class="sl">/</span>09<span class="sl">/</span>2017</div>
<div style="left:163px;top:373px;width:1px;height:18px;background:#c0c0c0;"></div>
<div class="t" style="top:376px;font-size:12px;line-height:13px;color:#000;-webkit-text-stroke:0.12px;left:94.96px;transform-origin:0 0;transform:scaleX(0.900);">09<span class="sl">/</span>09<span class="sl">/</span>2017</div>
<div style="left:259px;top:373px;width:1px;height:18px;background:#c0c0c0;"></div>
<div class="t" style="top:376px;font-size:12px;line-height:13px;color:#000;-webkit-text-stroke:0.12px;right:476.16px;transform-origin:100% 0;transform:scaleX(0.900);">566,26</div>
<div style="left:355px;top:373px;width:1px;height:18px;background:#c0c0c0;"></div>
<div class="t" style="top:376px;font-size:12px;line-height:13px;color:#000;-webkit-text-stroke:0.12px;right:380.16px;transform-origin:100% 0;transform:scaleX(0.900);">172,96</div>
<div style="left:451px;top:373px;width:1px;height:18px;background:#c0c0c0;"></div>
<div class="t" style="top:376px;font-size:12px;line-height:13px;color:#000;-webkit-text-stroke:0.12px;right:284.16px;transform-origin:100% 0;transform:scaleX(0.900);">606,70</div>
<div style="left:547px;top:373px;width:1px;height:18px;background:#c0c0c0;"></div>
<div class="t" style="top:376px;font-size:12px;line-height:13px;color:#000;-webkit-text-stroke:0.12px;right:188.16px;transform-origin:100% 0;transform:scaleX(0.900);">938,21</div>
<div style="left:10px;top:391px;width:11px;height:17px;background:#d4d0c8;"></div>
<div style="left:10px;top:391px;width:11px;height:1px;background:#ffffff;"></div>
<div style="left:10px;top:391px;width:1px;height:17px;background:#ffffff;"></div>
<div style="left:21px;top:391px;width:1px;height:18px;background:#000;"></div>
<div style="left:10px;top:408px;width:12px;height:1px;background:#000;"></div>
<div style="left:22px;top:408px;width:526px;height:1px;background:#c0c0c0;"></div>
<div style="left:92px;top:391px;width:1px;height:18px;background:#c0c0c0;"></div>
<div class="t" style="top:394px;font-size:12px;line-height:13px;color:#000;-webkit-text-stroke:0.12px;left:23.96px;transform-origin:0 0;transform:scaleX(0.900);">10<span class="sl">/</span>09<span class="sl">/</span>2017</div>
<div style="left:163px;top:391px;width:1px;height:18px;background:#c0c0c0;"></div>
<div class="t" style="top:394px;font-size:12px;line-height:13px;color:#000;-webkit-text-stroke:0.12px;left:94.96px;transform-origin:0 0;transform:scaleX(0.900);">16<span class="sl">/</span>09<span class="sl">/</span>2017</div>
<div style="left:259px;top:391px;width:1px;height:18px;background:#c0c0c0;"></div>
<div class="t" style="top:394px;font-size:12px;line-height:13px;color:#000;-webkit-text-stroke:0.12px;right:476.16px;transform-origin:100% 0;transform:scaleX(0.900);">907,36</div>
<div style="left:355px;top:391px;width:1px;height:18px;background:#c0c0c0;"></div>
<div class="t" style="top:394px;font-size:12px;line-height:13px;color:#000;-webkit-text-stroke:0.12px;right:380.16px;transform-origin:100% 0;transform:scaleX(0.900);">393,68</div>
<div style="left:451px;top:391px;width:1px;height:18px;background:#c0c0c0;"></div>
<div class="t" style="top:394px;font-size:12px;line-height:13px;color:#000;-webkit-text-stroke:0.12px;right:284.16px;transform-origin:100% 0;transform:scaleX(0.900);">486,32</div>
<div style="left:547px;top:391px;width:1px;height:18px;background:#c0c0c0;"></div>
<div class="t" style="top:394px;font-size:12px;line-height:13px;color:#000;-webkit-text-stroke:0.12px;right:188.16px;transform-origin:100% 0;transform:scaleX(0.900);">548,11</div>
<div style="left:10px;top:409px;width:11px;height:17px;background:#d4d0c8;"></div>
<div style="left:10px;top:409px;width:11px;height:1px;background:#ffffff;"></div>
<div style="left:10px;top:409px;width:1px;height:17px;background:#ffffff;"></div>
<div style="left:21px;top:409px;width:1px;height:18px;background:#000;"></div>
<div style="left:10px;top:426px;width:12px;height:1px;background:#000;"></div>
<div style="left:22px;top:426px;width:526px;height:1px;background:#c0c0c0;"></div>
<div style="left:92px;top:409px;width:1px;height:18px;background:#c0c0c0;"></div>
<div class="t" style="top:412px;font-size:12px;line-height:13px;color:#000;-webkit-text-stroke:0.12px;left:23.96px;transform-origin:0 0;transform:scaleX(0.900);">17<span class="sl">/</span>09<span class="sl">/</span>2017</div>
<div style="left:163px;top:409px;width:1px;height:18px;background:#c0c0c0;"></div>
<div class="t" style="top:412px;font-size:12px;line-height:13px;color:#000;-webkit-text-stroke:0.12px;left:94.96px;transform-origin:0 0;transform:scaleX(0.900);">23<span class="sl">/</span>09<span class="sl">/</span>2017</div>
<div style="left:259px;top:409px;width:1px;height:18px;background:#c0c0c0;"></div>
<div class="t" style="top:412px;font-size:12px;line-height:13px;color:#000;-webkit-text-stroke:0.12px;right:476.16px;transform-origin:100% 0;transform:scaleX(0.900);">584,54</div>
<div style="left:355px;top:409px;width:1px;height:18px;background:#c0c0c0;"></div>
<div class="t" style="top:412px;font-size:12px;line-height:13px;color:#000;-webkit-text-stroke:0.12px;right:380.16px;transform-origin:100% 0;transform:scaleX(0.900);">752,81</div>
<div style="left:451px;top:409px;width:1px;height:18px;background:#c0c0c0;"></div>
<div class="t" style="top:412px;font-size:12px;line-height:13px;color:#000;-webkit-text-stroke:0.12px;right:284.16px;transform-origin:100% 0;transform:scaleX(0.900);">168,27</div>
<div style="left:547px;top:409px;width:1px;height:18px;background:#c0c0c0;"></div>
<div class="t" style="top:412px;font-size:12px;line-height:13px;color:#000;-webkit-text-stroke:0.12px;right:188.16px;transform-origin:100% 0;transform:scaleX(0.900);">716,38</div>
<div style="left:10px;top:427px;width:11px;height:17px;background:#d4d0c8;"></div>
<div style="left:10px;top:427px;width:11px;height:1px;background:#ffffff;"></div>
<div style="left:10px;top:427px;width:1px;height:17px;background:#ffffff;"></div>
<div style="left:21px;top:427px;width:1px;height:18px;background:#000;"></div>
<div style="left:10px;top:444px;width:12px;height:1px;background:#000;"></div>
<div style="left:22px;top:444px;width:526px;height:1px;background:#c0c0c0;"></div>
<div style="left:92px;top:427px;width:1px;height:18px;background:#c0c0c0;"></div>
<div class="t" style="top:430px;font-size:12px;line-height:13px;color:#000;-webkit-text-stroke:0.12px;left:23.96px;transform-origin:0 0;transform:scaleX(0.900);">24<span class="sl">/</span>09<span class="sl">/</span>2017</div>
<div style="left:163px;top:427px;width:1px;height:18px;background:#c0c0c0;"></div>
<div class="t" style="top:430px;font-size:12px;line-height:13px;color:#000;-webkit-text-stroke:0.12px;left:94.96px;transform-origin:0 0;transform:scaleX(0.900);">30<span class="sl">/</span>09<span class="sl">/</span>2017</div>
<div style="left:259px;top:427px;width:1px;height:18px;background:#c0c0c0;"></div>
<div class="t" style="top:430px;font-size:12px;line-height:13px;color:#000;-webkit-text-stroke:0.12px;right:476.16px;transform-origin:100% 0;transform:scaleX(0.900);">694,30</div>
<div style="left:355px;top:427px;width:1px;height:18px;background:#c0c0c0;"></div>
<div class="t" style="top:430px;font-size:12px;line-height:13px;color:#000;-webkit-text-stroke:0.12px;right:380.16px;transform-origin:100% 0;transform:scaleX(0.900);">927,94</div>
<div style="left:451px;top:427px;width:1px;height:18px;background:#c0c0c0;"></div>
<div class="t" style="top:430px;font-size:12px;line-height:13px;color:#000;-webkit-text-stroke:0.12px;right:284.16px;transform-origin:100% 0;transform:scaleX(0.900);">233,64</div>
<div style="left:547px;top:427px;width:1px;height:18px;background:#c0c0c0;"></div>
<div class="t" style="top:430px;font-size:12px;line-height:13px;color:#000;-webkit-text-stroke:0.12px;right:188.16px;transform-origin:100% 0;transform:scaleX(0.900);">950,02</div>
<div style="left:10px;top:445px;width:11px;height:17px;background:#d4d0c8;"></div>
<div style="left:10px;top:445px;width:11px;height:1px;background:#ffffff;"></div>
<div style="left:10px;top:445px;width:1px;height:17px;background:#ffffff;"></div>
<div style="left:21px;top:445px;width:1px;height:18px;background:#000;"></div>
<div style="left:10px;top:462px;width:12px;height:1px;background:#000;"></div>
<div style="left:22px;top:462px;width:526px;height:1px;background:#c0c0c0;"></div>
<div style="left:92px;top:445px;width:1px;height:18px;background:#c0c0c0;"></div>
<div class="t" style="top:448px;font-size:12px;line-height:13px;color:#000;-webkit-text-stroke:0.12px;left:23.96px;transform-origin:0 0;transform:scaleX(0.900);">01<span class="sl">/</span>10<span class="sl">/</span>2017</div>
<div style="left:163px;top:445px;width:1px;height:18px;background:#c0c0c0;"></div>
<div class="t" style="top:448px;font-size:12px;line-height:13px;color:#000;-webkit-text-stroke:0.12px;left:94.96px;transform-origin:0 0;transform:scaleX(0.900);">07<span class="sl">/</span>10<span class="sl">/</span>2017</div>
<div style="left:259px;top:445px;width:1px;height:18px;background:#c0c0c0;"></div>
<div class="t" style="top:448px;font-size:12px;line-height:13px;color:#000;-webkit-text-stroke:0.12px;right:476.16px;transform-origin:100% 0;transform:scaleX(0.900);">248,20</div>
<div style="left:355px;top:445px;width:1px;height:18px;background:#c0c0c0;"></div>
<div class="t" style="top:448px;font-size:12px;line-height:13px;color:#000;-webkit-text-stroke:0.12px;right:380.16px;transform-origin:100% 0;transform:scaleX(0.900);">036,53</div>
<div style="left:451px;top:445px;width:1px;height:18px;background:#c0c0c0;"></div>
<div class="t" style="top:448px;font-size:12px;line-height:13px;color:#000;-webkit-text-stroke:0.12px;right:284.16px;transform-origin:100% 0;transform:scaleX(0.900);">788,33</div>
<div style="left:547px;top:445px;width:1px;height:18px;background:#c0c0c0;"></div>
<div class="t" style="top:448px;font-size:12px;line-height:13px;color:#000;-webkit-text-stroke:0.12px;right:188.16px;transform-origin:100% 0;transform:scaleX(0.900);">738,35</div>
<div style="left:10px;top:463px;width:11px;height:17px;background:#d4d0c8;"></div>
<div style="left:10px;top:463px;width:11px;height:1px;background:#ffffff;"></div>
<div style="left:10px;top:463px;width:1px;height:17px;background:#ffffff;"></div>
<div style="left:21px;top:463px;width:1px;height:18px;background:#000;"></div>
<div style="left:10px;top:480px;width:12px;height:1px;background:#000;"></div>
<div style="left:22px;top:480px;width:526px;height:1px;background:#c0c0c0;"></div>
<div style="left:92px;top:463px;width:1px;height:18px;background:#c0c0c0;"></div>
<div class="t" style="top:466px;font-size:12px;line-height:13px;color:#000;-webkit-text-stroke:0.12px;left:23.96px;transform-origin:0 0;transform:scaleX(0.900);">08<span class="sl">/</span>10<span class="sl">/</span>2017</div>
<div style="left:163px;top:463px;width:1px;height:18px;background:#c0c0c0;"></div>
<div class="t" style="top:466px;font-size:12px;line-height:13px;color:#000;-webkit-text-stroke:0.12px;left:94.96px;transform-origin:0 0;transform:scaleX(0.900);">14<span class="sl">/</span>10<span class="sl">/</span>2017</div>
<div style="left:259px;top:463px;width:1px;height:18px;background:#c0c0c0;"></div>
<div class="t" style="top:466px;font-size:12px;line-height:13px;color:#000;-webkit-text-stroke:0.12px;right:476.16px;transform-origin:100% 0;transform:scaleX(0.900);">728,61</div>
<div style="left:355px;top:463px;width:1px;height:18px;background:#c0c0c0;"></div>
<div class="t" style="top:466px;font-size:12px;line-height:13px;color:#000;-webkit-text-stroke:0.12px;right:380.16px;transform-origin:100% 0;transform:scaleX(0.900);">203,02</div>
<div style="left:451px;top:463px;width:1px;height:18px;background:#c0c0c0;"></div>
<div class="t" style="top:466px;font-size:12px;line-height:13px;color:#000;-webkit-text-stroke:0.12px;right:284.16px;transform-origin:100% 0;transform:scaleX(0.900);">525,59</div>
<div style="left:547px;top:463px;width:1px;height:18px;background:#c0c0c0;"></div>
<div class="t" style="top:466px;font-size:12px;line-height:13px;color:#000;-webkit-text-stroke:0.12px;right:188.16px;transform-origin:100% 0;transform:scaleX(0.900);">212,76</div>
<div style="left:10px;top:481px;width:11px;height:17px;background:#d4d0c8;"></div>
<div style="left:10px;top:481px;width:11px;height:1px;background:#ffffff;"></div>
<div style="left:10px;top:481px;width:1px;height:17px;background:#ffffff;"></div>
<div style="left:21px;top:481px;width:1px;height:18px;background:#000;"></div>
<div style="left:10px;top:498px;width:12px;height:1px;background:#000;"></div>
<div style="left:22px;top:498px;width:526px;height:1px;background:#c0c0c0;"></div>
<div style="left:92px;top:481px;width:1px;height:18px;background:#c0c0c0;"></div>
<div class="t" style="top:484px;font-size:12px;line-height:13px;color:#000;-webkit-text-stroke:0.12px;left:23.96px;transform-origin:0 0;transform:scaleX(0.900);">15<span class="sl">/</span>10<span class="sl">/</span>2017</div>
<div style="left:163px;top:481px;width:1px;height:18px;background:#c0c0c0;"></div>
<div class="t" style="top:484px;font-size:12px;line-height:13px;color:#000;-webkit-text-stroke:0.12px;left:94.96px;transform-origin:0 0;transform:scaleX(0.900);">21<span class="sl">/</span>10<span class="sl">/</span>2017</div>
<div style="left:259px;top:481px;width:1px;height:18px;background:#c0c0c0;"></div>
<div class="t" style="top:484px;font-size:12px;line-height:13px;color:#000;-webkit-text-stroke:0.12px;right:476.16px;transform-origin:100% 0;transform:scaleX(0.900);">752,35</div>
<div style="left:355px;top:481px;width:1px;height:18px;background:#c0c0c0;"></div>
<div class="t" style="top:484px;font-size:12px;line-height:13px;color:#000;-webkit-text-stroke:0.12px;right:380.16px;transform-origin:100% 0;transform:scaleX(0.900);">776,58</div>
<div style="left:451px;top:481px;width:1px;height:18px;background:#c0c0c0;"></div>
<div class="t" style="top:484px;font-size:12px;line-height:13px;color:#000;-webkit-text-stroke:0.12px;right:284.16px;transform-origin:100% 0;transform:scaleX(0.900);">024,23</div>
<div style="left:547px;top:481px;width:1px;height:18px;background:#c0c0c0;"></div>
<div class="t" style="top:484px;font-size:12px;line-height:13px;color:#000;-webkit-text-stroke:0.12px;right:188.16px;transform-origin:100% 0;transform:scaleX(0.900);">236,99</div>
<div class="trk" style="left:706px;top:229px;width:16px;height:284px;"></div>
<div style="left:706px;top:229px;width:16px;height:16px;background:#d4d0c8;"></div>
<div style="left:707px;top:230px;width:13px;height:1px;background:#ffffff;"></div>
<div style="left:707px;top:230px;width:1px;height:13px;background:#ffffff;"></div>
<div style="left:706px;top:244px;width:16px;height:1px;background:#404040;"></div>
<div style="left:721px;top:229px;width:1px;height:16px;background:#404040;"></div>
<div style="left:707px;top:243px;width:14px;height:1px;background:#808080;"></div>
<div style="left:720px;top:230px;width:1px;height:14px;background:#808080;"></div>
<div style="left:713px;top:235px;width:1px;height:1px;background:#000;"></div>
<div style="left:712px;top:236px;width:3px;height:1px;background:#000;"></div>
<div style="left:711px;top:237px;width:5px;height:1px;background:#000;"></div>
<div style="left:710px;top:238px;width:7px;height:1px;background:#000;"></div>
<div style="left:706px;top:497px;width:16px;height:16px;background:#d4d0c8;"></div>
<div style="left:707px;top:498px;width:13px;height:1px;background:#ffffff;"></div>
<div style="left:707px;top:498px;width:1px;height:13px;background:#ffffff;"></div>
<div style="left:706px;top:512px;width:16px;height:1px;background:#404040;"></div>
<div style="left:721px;top:497px;width:1px;height:16px;background:#404040;"></div>
<div style="left:707px;top:511px;width:14px;height:1px;background:#808080;"></div>
<div style="left:720px;top:498px;width:1px;height:14px;background:#808080;"></div>
<div style="left:710px;top:503px;width:7px;height:1px;background:#000;"></div>
<div style="left:711px;top:504px;width:5px;height:1px;background:#000;"></div>
<div style="left:712px;top:505px;width:3px;height:1px;background:#000;"></div>
<div style="left:713px;top:506px;width:1px;height:1px;background:#000;"></div>
<div style="left:706px;top:280px;width:16px;height:28px;background:#d4d0c8;"></div>
<div style="left:707px;top:281px;width:13px;height:1px;background:#ffffff;"></div>
<div style="left:707px;top:281px;width:1px;height:25px;background:#ffffff;"></div>
<div style="left:706px;top:307px;width:16px;height:1px;background:#404040;"></div>
<div style="left:721px;top:280px;width:1px;height:28px;background:#404040;"></div>
<div style="left:707px;top:306px;width:14px;height:1px;background:#808080;"></div>
<div style="left:720px;top:281px;width:1px;height:26px;background:#808080;"></div>
<div style="left:7px;top:515px;width:717px;height:1px;background:#808080;"></div>
<div style="left:7px;top:516px;width:717px;height:1px;background:#ffffff;"></div>
<div class="t" style="top:518px;font-size:12px;line-height:13px;color:#000;letter-spacing:-0.3px;font-weight:bold;left:8.78px;transform-origin:0 0;transform:scaleX(1.030);">Tipos de Documentos</div>
<div style="left:8px;top:530px;width:716px;height:138px;background:#fff;"></div>
<div style="left:8px;top:530px;width:715px;height:1px;background:#808080;"></div>
<div style="left:8px;top:530px;width:1px;height:137px;background:#808080;"></div>
<div style="left:9px;top:531px;width:713px;height:1px;background:#404040;"></div>
<div style="left:9px;top:531px;width:1px;height:135px;background:#404040;"></div>
<div style="left:8px;top:667px;width:716px;height:1px;background:#ffffff;"></div>
<div style="left:723px;top:530px;width:1px;height:138px;background:#ffffff;"></div>
<div style="left:9px;top:666px;width:714px;height:1px;background:#d4d0c8;"></div>
<div style="left:722px;top:531px;width:1px;height:136px;background:#d4d0c8;"></div>
<div style="left:10px;top:532px;width:11px;height:17px;background:#d4d0c8;"></div>
<div style="left:10px;top:532px;width:11px;height:1px;background:#ffffff;"></div>
<div style="left:10px;top:532px;width:1px;height:17px;background:#ffffff;"></div>
<div style="left:21px;top:532px;width:1px;height:18px;background:#000;"></div>
<div style="left:22px;top:532px;width:202px;height:17px;background:#d4d0c8;"></div>
<div style="left:22px;top:532px;width:202px;height:1px;background:#ffffff;"></div>
<div style="left:22px;top:532px;width:1px;height:17px;background:#ffffff;"></div>
<div style="left:224px;top:532px;width:1px;height:18px;background:#000;"></div>
<div class="t" style="top:535px;font-size:12px;line-height:13px;color:#000;-webkit-text-stroke:0.12px;letter-spacing:-0.3px;left:-26.3px;width:300px;text-align:center;transform-origin:50% 0;transform:scaleX(0.944);">Tipo Documento</div>
<div style="left:225px;top:532px;width:97px;height:17px;background:#d4d0c8;"></div>
<div style="left:225px;top:532px;width:97px;height:1px;background:#ffffff;"></div>
<div style="left:225px;top:532px;width:1px;height:17px;background:#ffffff;"></div>
<div style="left:322px;top:532px;width:1px;height:18px;background:#000;"></div>
<div class="t" style="top:535px;font-size:12px;line-height:13px;color:#000;-webkit-text-stroke:0.12px;letter-spacing:-0.3px;left:124.2px;width:300px;text-align:center;transform-origin:50% 0;">Valor</div>
<div style="left:323px;top:532px;width:90px;height:17px;background:#d4d0c8;"></div>
<div style="left:323px;top:532px;width:90px;height:1px;background:#ffffff;"></div>
<div style="left:323px;top:532px;width:1px;height:17px;background:#ffffff;"></div>
<div style="left:413px;top:532px;width:1px;height:18px;background:#000;"></div>
<div class="t" style="top:535px;font-size:12px;line-height:13px;color:#000;-webkit-text-stroke:0.12px;letter-spacing:-0.3px;left:218.7px;width:300px;text-align:center;transform-origin:50% 0;transform:scaleX(0.951);">Saldo Período</div>
<div style="left:414px;top:532px;width:90px;height:17px;background:#d4d0c8;"></div>
<div style="left:414px;top:532px;width:90px;height:1px;background:#ffffff;"></div>
<div style="left:414px;top:532px;width:1px;height:17px;background:#ffffff;"></div>
<div style="left:504px;top:532px;width:1px;height:18px;background:#000;"></div>
<div class="t" style="top:535px;font-size:12px;line-height:13px;color:#000;-webkit-text-stroke:0.12px;letter-spacing:-0.3px;left:309.7px;width:300px;text-align:center;transform-origin:50% 0;transform:scaleX(0.942);">Saldo Geral</div>
<div style="left:10px;top:549px;width:495px;height:1px;background:#000;"></div>
<div style="left:10px;top:550px;width:11px;height:17px;background:#d4d0c8;"></div>
<div style="left:10px;top:550px;width:11px;height:1px;background:#ffffff;"></div>
<div style="left:10px;top:550px;width:1px;height:17px;background:#ffffff;"></div>
<div style="left:21px;top:550px;width:1px;height:18px;background:#000;"></div>
<div style="left:10px;top:567px;width:12px;height:1px;background:#000;"></div>
<div style="left:22px;top:567px;width:483px;height:1px;background:#c0c0c0;"></div>
<div style="left:224px;top:550px;width:1px;height:18px;background:#c0c0c0;"></div>
<div class="t" style="top:553px;font-size:12px;line-height:13px;color:#000;-webkit-text-stroke:0.12px;letter-spacing:-0.3px;left:23.83px;transform-origin:0 0;transform:scaleX(0.943);">DUPLICATAS A RECEBER</div>
<div style="left:322px;top:550px;width:1px;height:18px;background:#c0c0c0;"></div>
<div class="t" style="top:553px;font-size:12px;line-height:13px;color:#000;-webkit-text-stroke:0.12px;right:413.16px;transform-origin:100% 0;transform:scaleX(0.900);">0,00</div>
<div style="left:413px;top:550px;width:1px;height:18px;background:#c0c0c0;"></div>
<div class="t" style="top:553px;font-size:12px;line-height:13px;color:#000;-webkit-text-stroke:0.12px;right:322.16px;transform-origin:100% 0;transform:scaleX(0.900);">0,00</div>
<div style="left:504px;top:550px;width:1px;height:18px;background:#c0c0c0;"></div>
<div class="t" style="top:553px;font-size:12px;line-height:13px;color:#000;-webkit-text-stroke:0.12px;right:231.16px;transform-origin:100% 0;transform:scaleX(0.900);">544,91</div>
<div style="left:10px;top:568px;width:11px;height:17px;background:#d4d0c8;"></div>
<div style="left:10px;top:568px;width:11px;height:1px;background:#ffffff;"></div>
<div style="left:10px;top:568px;width:1px;height:17px;background:#ffffff;"></div>
<div style="left:21px;top:568px;width:1px;height:18px;background:#000;"></div>
<div style="left:10px;top:585px;width:12px;height:1px;background:#000;"></div>
<div style="left:22px;top:585px;width:483px;height:1px;background:#c0c0c0;"></div>
<div style="left:224px;top:568px;width:1px;height:18px;background:#c0c0c0;"></div>
<div class="t" style="top:571px;font-size:12px;line-height:13px;color:#000;-webkit-text-stroke:0.12px;letter-spacing:-0.3px;left:23.83px;transform-origin:0 0;transform:scaleX(0.953);">DUPLICATAS A PAGAR</div>
<div style="left:322px;top:568px;width:1px;height:18px;background:#c0c0c0;"></div>
<div class="t" style="top:571px;font-size:12px;line-height:13px;color:#000;-webkit-text-stroke:0.12px;right:413.16px;transform-origin:100% 0;transform:scaleX(0.900);">0,00</div>
<div style="left:413px;top:568px;width:1px;height:18px;background:#c0c0c0;"></div>
<div class="t" style="top:571px;font-size:12px;line-height:13px;color:#000;-webkit-text-stroke:0.12px;right:322.16px;transform-origin:100% 0;transform:scaleX(0.900);">0,00</div>
<div style="left:504px;top:568px;width:1px;height:18px;background:#c0c0c0;"></div>
<div class="t" style="top:571px;font-size:12px;line-height:13px;color:#000;-webkit-text-stroke:0.12px;right:231.16px;transform-origin:100% 0;transform:scaleX(0.900);">544,91</div>
<div style="left:10px;top:586px;width:11px;height:17px;background:#d4d0c8;"></div>
<div style="left:10px;top:586px;width:11px;height:1px;background:#ffffff;"></div>
<div style="left:10px;top:586px;width:1px;height:17px;background:#ffffff;"></div>
<div style="left:21px;top:586px;width:1px;height:18px;background:#000;"></div>
<div style="left:10px;top:603px;width:12px;height:1px;background:#000;"></div>
<div style="left:22px;top:603px;width:483px;height:1px;background:#c0c0c0;"></div>
<div style="left:224px;top:586px;width:1px;height:18px;background:#c0c0c0;"></div>
<div class="t" style="top:589px;font-size:12px;line-height:13px;color:#000;-webkit-text-stroke:0.12px;letter-spacing:-0.3px;left:23.84px;transform-origin:0 0;transform:scaleX(0.932);">OUTROS PAGAMENTOS</div>
<div style="left:322px;top:586px;width:1px;height:18px;background:#c0c0c0;"></div>
<div class="t" style="top:589px;font-size:12px;line-height:13px;color:#000;-webkit-text-stroke:0.12px;right:413.16px;transform-origin:100% 0;transform:scaleX(0.900);">0,00</div>
<div style="left:413px;top:586px;width:1px;height:18px;background:#c0c0c0;"></div>
<div class="t" style="top:589px;font-size:12px;line-height:13px;color:#000;-webkit-text-stroke:0.12px;right:322.16px;transform-origin:100% 0;transform:scaleX(0.900);">0,00</div>
<div style="left:504px;top:586px;width:1px;height:18px;background:#c0c0c0;"></div>
<div class="t" style="top:589px;font-size:12px;line-height:13px;color:#000;-webkit-text-stroke:0.12px;right:231.16px;transform-origin:100% 0;transform:scaleX(0.900);">544,91</div>
<div style="left:10px;top:604px;width:11px;height:17px;background:#d4d0c8;"></div>
<div style="left:10px;top:604px;width:11px;height:1px;background:#ffffff;"></div>
<div style="left:10px;top:604px;width:1px;height:17px;background:#ffffff;"></div>
<div style="left:21px;top:604px;width:1px;height:18px;background:#000;"></div>
<div style="left:10px;top:621px;width:12px;height:1px;background:#000;"></div>
<svg style="left:13px;top:607px" width="6" height="11" viewBox="0 0 6 11"><polygon points="0,0 0,11 6,5.5" fill="#000"/></svg>
<div style="left:22px;top:621px;width:483px;height:1px;background:#c0c0c0;"></div>
<div style="left:224px;top:604px;width:1px;height:18px;background:#c0c0c0;"></div>
<div class="t" style="top:607px;font-size:12px;line-height:13px;color:#000;-webkit-text-stroke:0.12px;letter-spacing:-0.3px;left:23.85px;transform-origin:0 0;transform:scaleX(0.923);">PEDIDOS DE COMPRA</div>
<div style="left:322px;top:604px;width:1px;height:18px;background:#c0c0c0;"></div>
<div class="t" style="top:607px;font-size:12px;line-height:13px;color:#000;-webkit-text-stroke:0.12px;right:413.16px;transform-origin:100% 0;transform:scaleX(0.900);">0,00</div>
<div style="left:413px;top:604px;width:1px;height:18px;background:#c0c0c0;"></div>
<div class="t" style="top:607px;font-size:12px;line-height:13px;color:#000;-webkit-text-stroke:0.12px;right:322.16px;transform-origin:100% 0;transform:scaleX(0.900);">0,00</div>
<div style="left:504px;top:604px;width:1px;height:18px;background:#c0c0c0;"></div>
<div class="t" style="top:607px;font-size:12px;line-height:13px;color:#000;-webkit-text-stroke:0.12px;right:231.16px;transform-origin:100% 0;transform:scaleX(0.900);">544,91</div>
<div class="trk" style="left:706px;top:532px;width:16px;height:134px;"></div>
<div style="left:706px;top:532px;width:16px;height:16px;background:#d4d0c8;"></div>
<div style="left:707px;top:533px;width:13px;height:1px;background:#ffffff;"></div>
<div style="left:707px;top:533px;width:1px;height:13px;background:#ffffff;"></div>
<div style="left:706px;top:547px;width:16px;height:1px;background:#404040;"></div>
<div style="left:721px;top:532px;width:1px;height:16px;background:#404040;"></div>
<div style="left:707px;top:546px;width:14px;height:1px;background:#808080;"></div>
<div style="left:720px;top:533px;width:1px;height:14px;background:#808080;"></div>
<div style="left:713px;top:538px;width:1px;height:1px;background:#000;"></div>
<div style="left:712px;top:539px;width:3px;height:1px;background:#000;"></div>
<div style="left:711px;top:540px;width:5px;height:1px;background:#000;"></div>
<div style="left:710px;top:541px;width:7px;height:1px;background:#000;"></div>
<div style="left:706px;top:650px;width:16px;height:16px;background:#d4d0c8;"></div>
<div style="left:707px;top:651px;width:13px;height:1px;background:#ffffff;"></div>
<div style="left:707px;top:651px;width:1px;height:13px;background:#ffffff;"></div>
<div style="left:706px;top:665px;width:16px;height:1px;background:#404040;"></div>
<div style="left:721px;top:650px;width:1px;height:16px;background:#404040;"></div>
<div style="left:707px;top:664px;width:14px;height:1px;background:#808080;"></div>
<div style="left:720px;top:651px;width:1px;height:14px;background:#808080;"></div>
<div style="left:710px;top:656px;width:7px;height:1px;background:#000;"></div>
<div style="left:711px;top:657px;width:5px;height:1px;background:#000;"></div>
<div style="left:712px;top:658px;width:3px;height:1px;background:#000;"></div>
<div style="left:713px;top:659px;width:1px;height:1px;background:#000;"></div>
<div style="left:706px;top:592px;width:16px;height:58px;background:#d4d0c8;"></div>
<div style="left:707px;top:593px;width:13px;height:1px;background:#ffffff;"></div>
<div style="left:707px;top:593px;width:1px;height:55px;background:#ffffff;"></div>
<div style="left:706px;top:649px;width:16px;height:1px;background:#404040;"></div>
<div style="left:721px;top:592px;width:1px;height:58px;background:#404040;"></div>
<div style="left:707px;top:648px;width:14px;height:1px;background:#808080;"></div>
<div style="left:720px;top:593px;width:1px;height:56px;background:#808080;"></div>
</body></html>
